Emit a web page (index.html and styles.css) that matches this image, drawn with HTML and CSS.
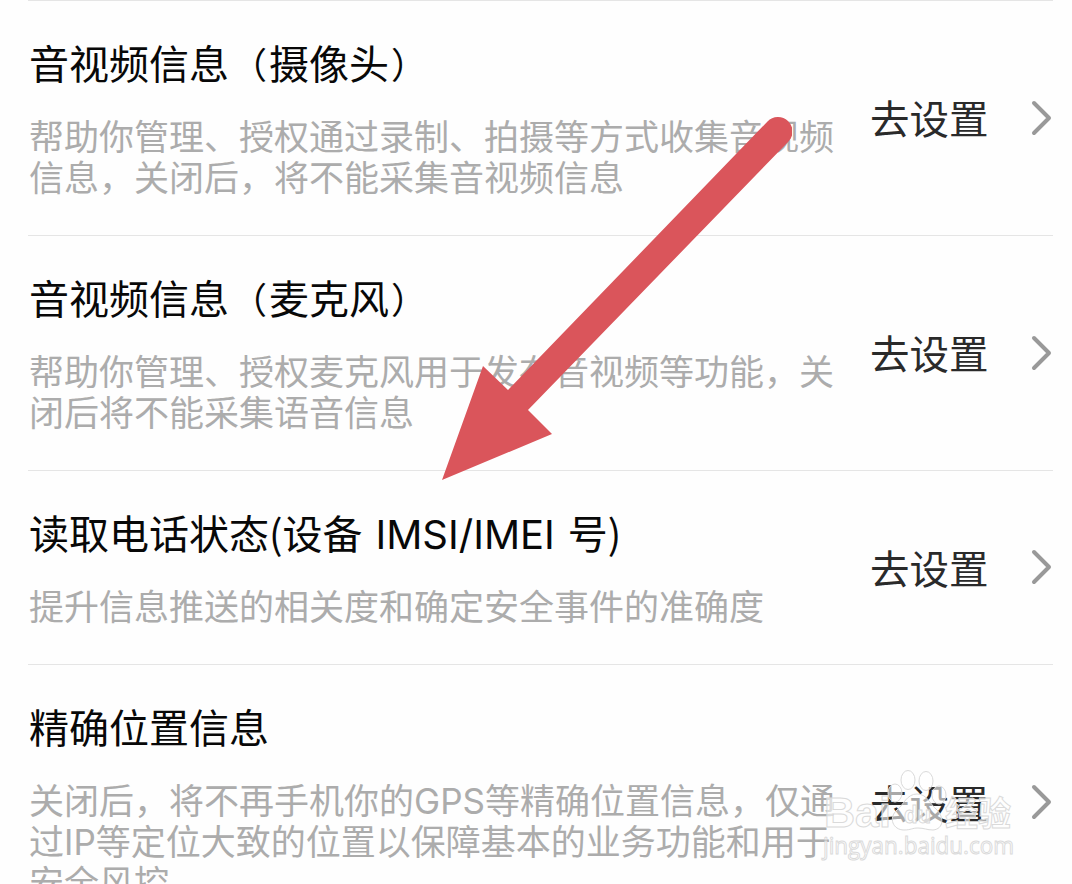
FILE: index.html
```html
<!DOCTYPE html>
<html lang="zh-CN">
<head>
    <meta charset="UTF-8">
    <meta name="viewport" content="width=device-width, initial-scale=1.0">
    <title>权限设置</title>
    <link rel="stylesheet" href="styles.css">
</head>
<body>
    <div class="permission-list">
        <div class="permission-row">
            <div class="permission-info">
                <div class="permission-title">音视频信息<span class="paren">（</span>摄像头<span class="paren">）</span></div>
                <div class="permission-desc">帮助你管理、授权通过录制、拍摄等方式收集音视频<br>信息，关闭后，将不能采集音视频信息</div>
            </div>
            <div class="permission-action">去设置</div>
            <svg class="chevron" viewBox="0 0 22 36"><path d="M3 3L18 18L3 33"/></svg>
        </div>

        <div class="permission-row">
            <div class="permission-info">
                <div class="permission-title">音视频信息<span class="paren">（</span>麦克风<span class="paren">）</span></div>
                <div class="permission-desc">帮助你管理、授权麦克风用于发布音视频等功能，关<br>闭后将不能采集语音信息</div>
            </div>
            <div class="permission-action">去设置</div>
            <svg class="chevron" viewBox="0 0 22 36"><path d="M3 3L18 18L3 33"/></svg>
        </div>

        <div class="permission-row">
            <div class="permission-info">
                <div class="permission-title">读取电话状态(设备 <span class="latin">IMSI/IMEI</span> 号)</div>
                <div class="permission-desc">提升信息推送的相关度和确定安全事件的准确度</div>
            </div>
            <div class="permission-action">去设置</div>
            <svg class="chevron" viewBox="0 0 22 36"><path d="M3 3L18 18L3 33"/></svg>
        </div>

        <div class="permission-row">
            <div class="permission-info">
                <div class="permission-title">精确位置信息</div>
                <div class="permission-desc">关闭后，将不再手机你的<span class="latin">GPS</span>等精确位置信息，仅通<br>过<span class="latin">IP</span>等定位大致的位置以保障基本的业务功能和用于<br>安全风控</div>
            </div>
            <div class="permission-action">去设置</div>
            <svg class="chevron" viewBox="0 0 22 36"><path d="M3 3L18 18L3 33"/></svg>
        </div>
    </div>

    <!-- Arrow pointing at the phone state row -->
    <svg class="arrow" viewBox="0 0 352 366">
        <path d="M2 364L43 250L68 274L327.500 5.500A14.500 14.500 0 0 1 348.500 25.500L88 294L112 318Z"/>
    </svg>

    <svg class="watermark" viewBox="0 0 200 104">
        <g class="paw">
            <ellipse cx="75" cy="30" rx="7" ry="9"/>
            <ellipse cx="88" cy="17" rx="7" ry="9.500"/>
            <ellipse cx="106" cy="18" rx="7" ry="9.500"/>
            <ellipse cx="119" cy="32" rx="7" ry="9"/>
            <path d="M97 31C87 31 84 41 77 47C68 55 73 67 84 67C91 67 92 65 98 65C104 65 107 67 113 67C124 66 124 54 117 47C109 40 107 31 97 31Z"/>
        </g>
        <text class="brand" x="4" y="64" textLength="67" lengthAdjust="spacingAndGlyphs">Bai</text>
        <text class="brand brand-small" x="84" y="60" textLength="27" lengthAdjust="spacingAndGlyphs">du</text>
        <text class="brand brand-cn" x="125" y="63" textLength="66" lengthAdjust="spacingAndGlyphs">经验</text>
        <text class="site" x="3" y="91" textLength="191" lengthAdjust="spacingAndGlyphs">jingyan.baidu.com</text>
    </svg>
</body>
</html>
```
FILE: styles.css
```css
* { box-sizing: border-box; margin: 0; padding: 0; }

body {
    position: relative;
    height: 884px;
    overflow: hidden;
    background: #fefefe;
    color: #111;
    font-family: "Noto Sans CJK SC", sans-serif;
}

.permission-list {
    height: 884px;
    overflow: hidden;
    padding: 0 19px 0 28px;
}

.permission-row {
    display: flex;
    align-items: center;
    border-top: 1px solid #e5e5e5;
    padding: 37px 0 39px 1px;
}

.permission-info {
    width: 841px;
    flex-shrink: 0;
    white-space: nowrap;
}

.permission-title {
    font-size: 40px;
    line-height: 48px;
    margin-bottom: 28px;
    color: #080808;
    word-spacing: 4px;
}

/* slightly smaller brackets that still take a full cell */
.paren {
    display: inline-block;
    width: 40px;
    font-size: 36px;
    line-height: 1;
    text-align: center;
}

.permission-desc {
    font-size: 35px;
    line-height: 41px;
    color: #acacac;
}

.latin {
    font-family: Inter, sans-serif;
    line-height: 1;
}

.permission-action {
    font-size: 39.5px;
    line-height: 48px;
    color: #2a2a2a;
    white-space: nowrap;
}

.chevron {
    width: 22px;
    height: 36px;
    margin-top: 1px;
    margin-left: auto;
    fill: none;
    stroke: #999;
    stroke-width: 4;
    stroke-linecap: round;
    stroke-linejoin: round;
}

.arrow {
    position: absolute;
    left: 440px;
    top: 116px;
    width: 352px;
    height: 366px;
    fill: #da555b;
}

.watermark {
    position: absolute;
    left: 820px;
    top: 763px;
    width: 200px;
    height: 104px;
    fill: rgba(255, 255, 255, 0.6);
    stroke: #dadada;
    stroke-width: 1;
}

.brand {
    font-family: "Liberation Sans", sans-serif;
    font-size: 42px;
    font-weight: bold;
}

.brand-small {
    font-size: 24px;
}

.brand-cn {
    font-family: "Noto Sans CJK SC", sans-serif;
    font-size: 34px;
}

.site {
    font-family: "Open Sans", sans-serif;
    font-size: 24px;
}
```
